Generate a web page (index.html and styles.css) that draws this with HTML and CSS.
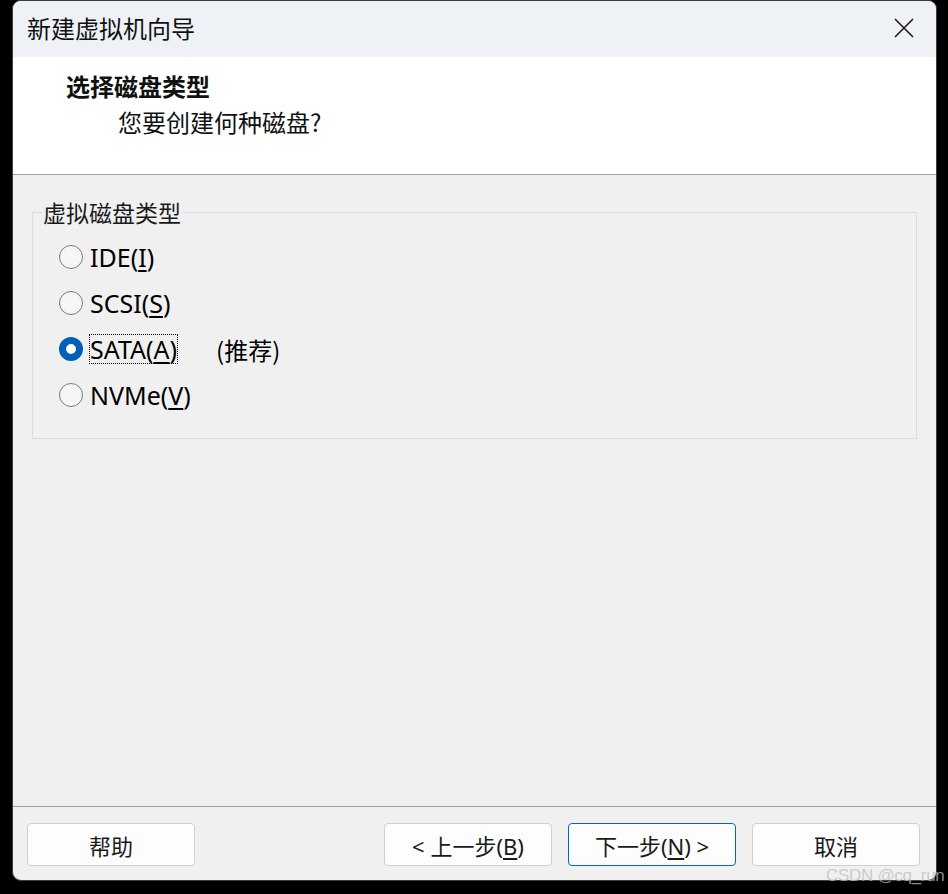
FILE: index.html
```html
<!DOCTYPE html>
<html lang="zh-CN">
<head>
<meta charset="utf-8">
<title>新建虚拟机向导</title>
<link rel="stylesheet" href="styles.css">
</head>
<body>
<div class="window">
  <div class="titlebar">
    <span class="title">新建虚拟机向导</span>
    <span class="close" aria-label="关闭">
      <svg width="20" height="20" viewBox="0 0 20 20"><path d="M1 1 L19 19 M19 1 L1 19" stroke="#1b1b1b" stroke-width="1.6" fill="none"/></svg>
    </span>
  </div>
  <div class="header">
    <div class="h-title">选择磁盘类型</div>
    <div class="h-sub">您要创建何种磁盘?</div>
  </div>
  <div class="content">
    <fieldset class="group">
      <legend>虚拟磁盘类型</legend>
      <div class="radio"><span class="dot"></span><span class="label">IDE(<u>I</u>)</span></div>
      <div class="radio"><span class="dot"></span><span class="label">SCSI(<u>S</u>)</span></div>
      <div class="radio"><span class="dot checked"></span><span class="label focus">SATA(<u>A</u>)</span><span class="hint">(推荐)</span></div>
      <div class="radio"><span class="dot"></span><span class="label">NVMe(<u>V</u>)</span></div>
    </fieldset>
  </div>
  <div class="footer">
    <button class="btn">帮助</button>
    <div class="btn-group">
      <button class="btn">&lt; 上一步(<u>B</u>)</button>
      <button class="btn primary">下一步(<u>N</u>) &gt;</button>
      <button class="btn">取消</button>
    </div>
  </div>
</div>
<div class="watermark">CSDN @cq_run</div>
</body>
</html>
```
FILE: styles.css
```css
html, body {
  margin: 0;
  padding: 0;
  background: #000;
}
body {
  width: 948px;
  height: 894px;
  position: relative;
  overflow: hidden;
  font-family: "Noto Sans", "Noto Sans CJK SC", sans-serif;
  color: #1a1a1a;
}
.window {
  margin-left: 12px;
  width: 925px;
  height: 881px;
  box-sizing: border-box;
  border: 1px solid #3e3e3e;
  border-radius: 9px;
  overflow: hidden;
  background: #f0f0f0;
  display: flex;
  flex-direction: column;
}
.titlebar {
  height: 56px;
  flex: none;
  background: #eef2f6;
  display: flex;
  align-items: center;
  justify-content: space-between;
  padding: 0 22px 0 14px;
}
.title {
  font-family: "Noto Sans CJK SC", sans-serif;
  font-size: 24px;
  color: #111;
  line-height: 1;
  margin-top: -2px;
}
.close {
  display: flex;
  margin-top: -2px;
}
.header {
  height: 118px;
  flex: none;
  box-sizing: border-box;
  background: #fff;
  border-bottom: 1px solid #a0a0a0;
  padding: 11px 0 0 53px;
  font-family: "Noto Sans CJK SC", sans-serif;
  font-size: 24px;
  color: #111;
}
.h-title {
  font-weight: 700;
  line-height: 36px;
}
.h-sub {
  padding-left: 52px;
  line-height: 36px;
}
.content {
  flex: 1;
  padding: 24px 19px 0 19px;
}
.group {
  margin: 0;
  border: 1px solid #dcdcdc;
  padding: 9px 0 12px 26px;
  height: 240px;
  box-sizing: border-box;
}
.group legend {
  font-family: "Noto Sans CJK SC", sans-serif;
  font-size: 23px;
  color: #1a1a1a;
  padding: 0 1px;
  margin-left: -17px;
  line-height: 26px;
}
.radio {
  display: flex;
  align-items: center;
  height: 46px;
  font-size: 25px;
  color: #000;
}
.dot {
  width: 24px;
  height: 24px;
  box-sizing: border-box;
  border: 1px solid #7a7a7a;
  border-radius: 50%;
  background: #f6f6f6;
  margin-right: 6px;
  flex: none;
}
.dot.checked {
  border: 7px solid #005fb8;
  background: #fff;
}
.label {
  padding: 0;
  line-height: 28px;
  border: 1px dotted transparent;
}
.label.focus {
  border-color: #000;
}
.label u {
  text-underline-offset: 3px;
}
.hint {
  margin-left: 38px;
  font-family: "Noto Sans CJK SC", sans-serif;
  font-size: 24px;
}
.footer {
  flex: none;
  height: 74px;
  box-sizing: border-box;
  border-top: 1px solid #a0a0a0;
  display: flex;
  justify-content: space-between;
  padding: 16px 16px 0 14px;
}
.btn-group {
  display: flex;
  gap: 16px;
}
.btn {
  width: 168px;
  height: 43px;
  box-sizing: border-box;
  border: 1px solid #cfcfcf;
  border-radius: 4px;
  background: #fdfdfd;
  font-family: "Noto Sans", "Noto Sans CJK SC", sans-serif;
  font-size: 22px;
  color: #1a1a1a;
  padding: 0;
}
.btn.primary {
  border-color: #0067c0;
}
.btn u {
  text-underline-offset: 3px;
}
.watermark {
  position: absolute;
  left: 826px;
  top: 866px;
  font-family: "Liberation Sans", sans-serif;
  font-size: 17px;
  color: rgba(190, 190, 190, 0.75);
  letter-spacing: -0.3px;
}
```
